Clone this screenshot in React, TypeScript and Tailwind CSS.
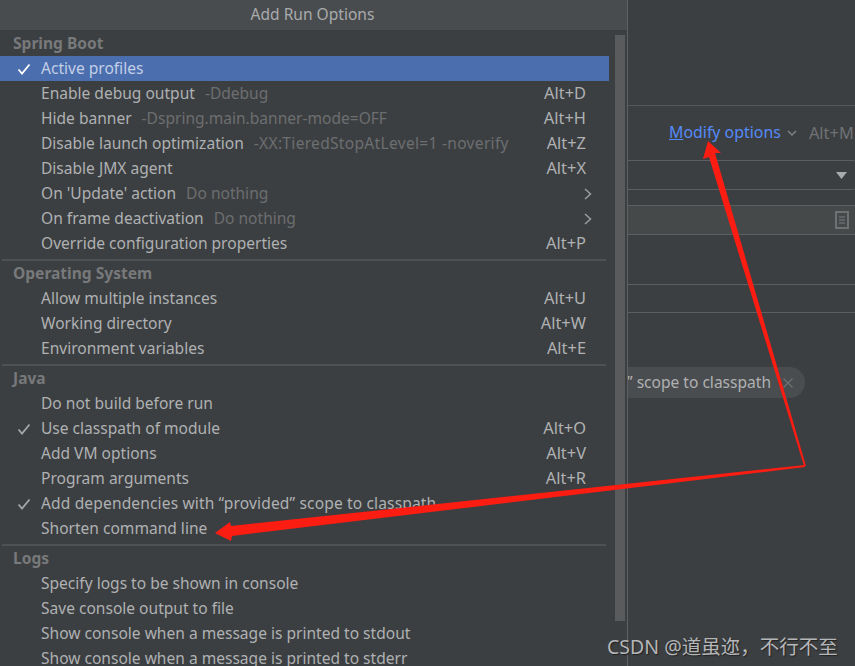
const sections = [
  {
    title: "Spring Boot",
    rows: [
      { label: "Active profiles", checked: true, active: true },
      { label: "Enable debug output", hint: "-Ddebug", keys: "Alt+D" },
      { label: "Hide banner", hint: "-Dspring.main.banner-mode=OFF", keys: "Alt+H" },
      { label: "Disable launch optimization", hint: "-XX:TieredStopAtLevel=1 -noverify", wide: true, keys: "Alt+Z" },
      { label: "Disable JMX agent", keys: "Alt+X" },
      { label: "On 'Update' action", hint: "Do nothing", more: true },
      { label: "On frame deactivation", hint: "Do nothing", more: true },
      { label: "Override configuration properties", keys: "Alt+P" },
    ],
  },
  {
    title: "Operating System",
    rows: [
      { label: "Allow multiple instances", keys: "Alt+U" },
      { label: "Working directory", keys: "Alt+W" },
      { label: "Environment variables", keys: "Alt+E" },
    ],
  },
  {
    title: "Java",
    rows: [
      { label: "Do not build before run" },
      { label: "Use classpath of module", checked: true, keys: "Alt+O" },
      { label: "Add VM options", keys: "Alt+V" },
      { label: "Program arguments", keys: "Alt+R" },
      { label: "Add dependencies with “provided” scope to classpath", checked: true, spaced: true },
      { label: "Shorten command line" },
    ],
  },
  {
    title: "Logs",
    rows: [
      { label: "Specify logs to be shown in console" },
      { label: "Save console output to file" },
      { label: "Show console when a message is printed to stdout" },
      { label: "Show console when a message is printed to stderr" },
    ],
  },
];

type Row = {
  label: string;
  hint?: string;
  wide?: boolean;
  spaced?: boolean;
  keys?: string;
  checked?: boolean;
  active?: boolean;
  more?: boolean;
};

function MenuRow({ row }: { row: Row }) {
  return (
    <div className={`relative flex h-[25px] shrink-0 items-center pl-[41px] pr-[23px] ${row.active ? "bg-[#4b6eaf]" : ""}`}>
      {row.checked && (
        <svg className="absolute left-[17px] top-[7px]" width="14" height="12" viewBox="0 0 14 12" fill="none">
          <path d="M1.5 6.5 L5 10.5 L12.5 1.5" stroke={row.active ? "#ffffff" : "#a4a7aa"} strokeWidth="1.8" />
        </svg>
      )}
      <span className={`${row.active ? "text-[#c3cfe6]" : ""} ${row.spaced ? "tracking-[0.14px]" : ""}`}>{row.label}</span>
      {row.hint && <span className={`ml-[10px] text-[#6c6e70] ${row.wide ? "tracking-[0.3px]" : ""}`}>{row.hint}</span>}
      {row.keys && <span className="ml-auto text-[16.4px]">{row.keys}</span>}
      {row.more && (
        <svg className="ml-auto -mr-[6px]" width="8" height="12" viewBox="0 0 8 12" fill="none">
          <path d="M1 1 L6.5 6 L1 11" stroke="#9a9da0" strokeWidth="1.5" />
        </svg>
      )}
    </div>
  );
}

export default function App() {
  return (
    <div className="relative flex h-[666px] w-[855px] overflow-hidden bg-[#3c3f41] text-[15.55px] text-[#afb1b3] [font-family:'Noto_Sans','Noto_Sans_CJK_SC',sans-serif]">
      <div className="flex w-[628px] shrink-0 flex-col border-r border-[#5e6062]">
        <div className="flex h-[30px] shrink-0 items-center justify-center bg-[#494c4f] pb-[1px] pr-[2px] text-[#a9abad]">Add Run Options</div>
        <div className="flex min-h-0 flex-1">
          <div className="w-[609px] shrink-0">
            {sections.map((section, i) => (
              <div key={section.title}>
                {i > 0 && <div className="mx-[2px] mt-[3px] h-[2px] w-[604px] bg-[#4f5153]" />}
                <div className={`flex items-center pl-[13px] font-bold text-[#77797b] ${i === 0 ? "h-[26px] pt-[2px]" : "h-[25px]"}`}>{section.title}</div>
                {section.rows.map((row) => (
                  <MenuRow key={row.label} row={row} />
                ))}
              </div>
            ))}
          </div>
          <div className="ml-[6px] mt-[5px] h-[586px] w-[10px] bg-[#595b5d]" />
        </div>
      </div>

      <div className="min-w-0 flex-1 overflow-hidden">
        <div className="mt-[105px] h-[1px] bg-[#55585a]" />
        <div className="flex h-[54px] items-center pl-[41px]">
          <span className="whitespace-nowrap text-[15.9px] text-[#548af7]"><span className="underline">M</span>odify options</span>
          <svg className="ml-[6px] shrink-0" width="10" height="7" viewBox="0 0 10 7" fill="none">
            <path d="M1 1 L5 5 L9 1" stroke="#7f8285" strokeWidth="1.5" />
          </svg>
          <span className="ml-[12px] whitespace-nowrap text-[16.4px] text-[#6f7275]">Alt+M</span>
        </div>
        <div className="flex h-[30px] items-center justify-end rounded-r-[2px] border-y border-[#5c5f61] pr-[8px]">
          <svg width="11" height="7" viewBox="0 0 11 7">
            <path d="M0 0 H11 L5.5 7 Z" fill="#a8abae" />
          </svg>
        </div>
        <div className="mt-[15px] flex h-[30px] items-center justify-end border-y border-[#5c5f61] bg-[#45494a] pr-[6px]">
          <svg width="14" height="18" viewBox="0 0 14 18" fill="none">
            <rect x="1" y="1" width="12" height="16" stroke="#6e7173" strokeWidth="2" />
            <path d="M4 6 H10 M4 9 H10 M4 12 H10" stroke="#7b7e80" strokeWidth="1" />
          </svg>
        </div>
        <div className="mt-[49px] h-[29px] border-y border-[#5c5f61]" />
        <div className="mt-[54px] flex justify-end pr-[50px]">
          <div className="flex h-[31px] shrink-0 items-center whitespace-nowrap rounded-r-[16px] bg-[#4a4d4f] pl-[2px] pr-[12px]">
            <span>” scope to classpath</span>
            <svg className="ml-[12px]" width="10" height="10" viewBox="0 0 10 10" fill="none">
              <path d="M0.5 0.5 L9.5 9.5 M9.5 0.5 L0.5 9.5" stroke="#6e7173" strokeWidth="1.2" />
            </svg>
          </div>
        </div>
      </div>

      <svg className="pointer-events-none absolute left-0 top-0" width="855" height="666" viewBox="0 0 855 666">
        <polygon points="708,141 721,153 715,153 806,466 804,466 709,157 703,159" fill="#fb1c12" />
        <polygon points="215,533 230,522 231,526 805,465 805,467 232,536 231,541" fill="#fb1c12" />
      </svg>

      <div className="absolute left-[607px] top-[633px] text-[19.5px] leading-[28px] text-[#b4b6b8] [text-shadow:1px_1px_1px_#222]">CSDN @道虽迩，不行不至</div>
    </div>
  );
}
